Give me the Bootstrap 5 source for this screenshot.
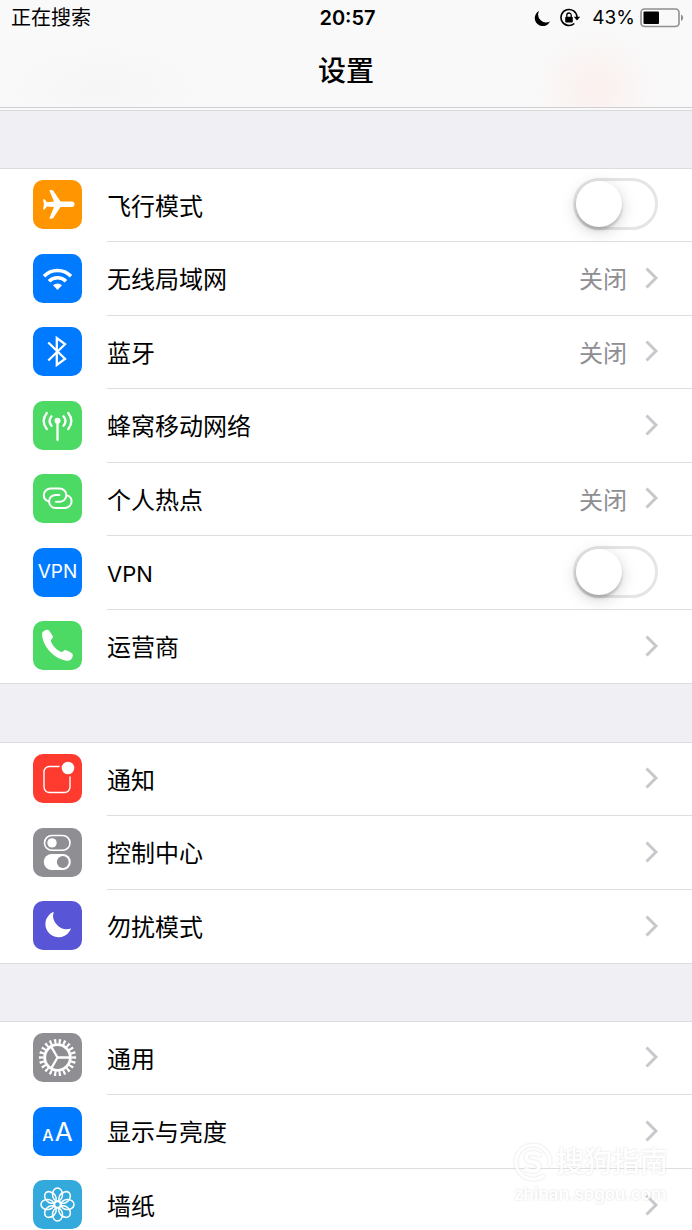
<!DOCTYPE html>
<html lang="zh-CN">
<head>
<meta charset="utf-8">
<meta name="viewport" content="width=device-width, initial-scale=1">
<title>设置</title>
<link href="https://cdn.jsdelivr.net/npm/bootstrap@5.3.0/dist/css/bootstrap.min.css" rel="stylesheet">
<style>
  body { font-family: "Inter", "Noto Sans CJK SC", sans-serif; color: #000; background: #efeff4; }
  .screen { height: 100vh; }
  .top-bar {
    background: radial-gradient(circle 62px at 86% 84%, #fbf0ee, rgba(251, 240, 238, 0)),
                radial-gradient(ellipse 110px 50px at 15% 84%, #f6f6f6, rgba(246, 246, 246, 0)), #f9f9f9;
    border-bottom: 1px solid #cfcfd2;
  }
  .status { height: 36px; padding: 0 8px 0 11px; font-size: 20px; line-height: 36px; }
  .clock { font-size: 20px; font-weight: 600; }
  .battery-text { font-size: 19px; margin: 0 5px 0 11px; }
  .page-title { font-size: 28px; line-height: 70px; font-weight: 500; height: 71px; }
  .settings { min-height: 0; overflow-y: auto; scrollbar-width: none; }
  .settings::-webkit-scrollbar { display: none; }
  .edge { height: 3px; background: #f9f9f9; border-bottom: 1px solid #d9d9dc; }
  .group { margin-top: 58px; border-top: 1px solid #dcdce0; border-bottom: 1px solid #dcdce0; background: #fff; }
  .edge + .group, .group:last-child { margin-top: 57px; }
  .cell { height: 73px; padding-left: 33px; gap: 25px; color: #000; font-size: 24px; line-height: 36px; }
  .group > li:nth-child(even) .cell { height: 74px; }
  .cell-body { border-bottom: 1px solid #dedee1; padding: 0 34px 2px 0; gap: 18px; }
  .cell-body > span { padding-top: 5px; }
  .group > li:last-child .cell-body { border-bottom: 0; }
  .tile { width: 49px; height: 49px; margin-bottom: 2px; border-radius: 10px; color: #fff; overflow: hidden; }
  .tile svg { display: block; width: 49px; height: 49px; fill: none; stroke: #fff; }
  .t-orange { background: #ff9500; }
  .t-blue { background: #007aff; }
  .t-green { background: #4cd964; }
  .t-red { background: #ff3b30; }
  .t-gray { background: #8e8e93; }
  .t-purple { background: #5856d6; }
  .t-cyan { background: #34aadc; }
  .latin { font-size: 22px; }
  .tile-vpn { font-size: 19px; font-weight: 400; }
  .tile-aa { gap: 1px; line-height: 49px; }
  .a-small { font-size: 16px; font-weight: 500; }
  .a-large { font-size: 26px; font-weight: 400; }
  .value { color: #8e8e93; }
  .chevron { width: 13px; height: 22px; fill: none; stroke: #c7c7cc; stroke-width: 3; }
  .ios-switch.form-check-input {
    position: relative; width: 85px; height: 52px; margin: 0; border: 3px solid #e5e5e5; border-radius: 26px;
    background: #fff; cursor: pointer;
  }
  .ios-switch::before {
    content: ""; position: absolute; left: 0; top: 0; width: 46px; height: 46px; border-radius: 50%;
    background: #fff; box-shadow: 0 3px 3px rgba(0, 0, 0, .18), 0 4px 16px rgba(0, 0, 0, .18);
  }
  .ios-switch.form-check-input:checked { background: #4cd964; border-color: #4cd964; }
  .ios-switch:checked::before { left: auto; right: 0; }
  .stamp { position: fixed; right: 24px; bottom: 24px; color: #fff; opacity: .8; pointer-events: none; filter: drop-shadow(0 0 1px #d4d4d4); }
  .stamp svg { width: 38px; height: 38px; fill: none; stroke: #fff; stroke-width: 3; }
  .stamp-name { font-size: 28px; line-height: 40px; font-weight: 500; }
  .stamp-url { font-size: 17px; line-height: 24px; font-weight: 600; }
</style>
</head>
<body>
<svg class="d-none" aria-hidden="true">
  <symbol id="chev" viewBox="0 0 13 22"><path d="M1.5 1.5 11 11 1.5 20.5"/></symbol>
</svg>
<div class="screen d-flex flex-column">
  <header class="top-bar flex-shrink-0">
    <div class="status row g-0 align-items-center">
      <div class="col">正在搜索</div>
      <div class="col-auto clock">20:57</div>
      <div class="col d-flex justify-content-end align-items-center">
        <svg width="17" height="17" viewBox="0 0 17 17" aria-label="勿扰"><path d="M5 1A8 8 0 1 0 16 11.5 8 8 0 0 1 5 1Z"/></svg>
        <svg class="ms-2" width="22" height="20" viewBox="0 0 22 20" fill="none" stroke="#000" stroke-width="1.6" aria-label="方向锁定"><path d="M15.3 15.5A8 8 0 1 1 18 9"/><path d="M14.8 8.8h6.4L18 12.6Z" fill="#000" stroke="none"/><rect x="6.2" y="8.8" width="7.6" height="5.6" rx="1" fill="#000" stroke="none"/><path d="M7.8 9V7.2a2.2 2.2 0 0 1 4.4 0V9" stroke-width="1.3"/></svg>
        <span class="battery-text">43%</span>
        <svg width="44" height="20" viewBox="0 0 44 20" aria-label="电池"><rect x="1" y="1" width="38" height="17.5" rx="3.5" fill="none" stroke="#8f8f8f" stroke-width="1.6"/><rect x="3.5" y="3.6" width="15.5" height="12.4" rx="1"/><path d="M41 6.5q2.2 1 2.2 3.3T41 13Z" fill="#8f8f8f"/></svg>
      </div>
    </div>
    <h1 class="page-title text-center m-0">设置</h1>
  </header>

  <main class="settings flex-fill">
    <div class="edge"></div>
    <ul class="group list-unstyled mb-0">
      <li><label class="cell d-flex align-items-center" for="airplane">
        <span class="tile t-orange flex-shrink-0"><svg viewBox="0 0 49 49"><path fill="#fff" stroke="none" d="M27.500 21.500H38.800a2.700 2.700 0 0 1 0 5.400H27.500L20.300 38Q19 39.200 16.300 38.500L21 27 14 26.500 11.500 29.500H10L11 24.400 10 19.300H11.500L14 22.300 21 21.500 16.300 10.300Q19 9.300 20.300 10.800Z"/></svg></span>
        <span class="cell-body d-flex align-items-center flex-fill h-100"><span class="me-auto">飞行模式</span><input class="ios-switch form-check-input" type="checkbox" role="switch" id="airplane"></span>
      </label></li>
      <li><a class="cell d-flex align-items-center text-decoration-none" href="#wifi">
        <span class="tile t-blue flex-shrink-0"><svg viewBox="0 0 49 49"><path stroke-width="3.5" d="M11 22.300A18.500 18.500 0 0 1 38 22.300M16 27.300A12 12 0 0 1 33 27.300"/><path fill="#fff" stroke="none" d="M24.500 36 20 31.300A6.300 6.300 0 0 1 29 31.300Z"/></svg></span>
        <span class="cell-body d-flex align-items-center flex-fill h-100"><span class="me-auto">无线局域网</span><span class="value">关闭</span><svg class="chevron"><use href="#chev"/></svg></span>
      </a></li>
      <li><a class="cell d-flex align-items-center text-decoration-none" href="#bluetooth">
        <span class="tile t-blue flex-shrink-0"><svg viewBox="0 0 49 49"><path stroke-width="2.3" d="M15.300 15.500 32 31.800 23.800 38V11L32 17.200 15.300 33.500"/></svg></span>
        <span class="cell-body d-flex align-items-center flex-fill h-100"><span class="me-auto">蓝牙</span><span class="value">关闭</span><svg class="chevron"><use href="#chev"/></svg></span>
      </a></li>
      <li><a class="cell d-flex align-items-center text-decoration-none" href="#cellular">
        <span class="tile t-green flex-shrink-0"><svg viewBox="0 0 49 49"><circle cx="24.500" cy="19.700" r="3" fill="#fff" stroke="none"/><path stroke-width="2.300" stroke-linecap="round" d="M24.500 20V39M18.500 15.300Q14.500 20 18.500 24.800M30.500 15.300Q34.500 20 30.500 24.800M13.800 12Q7.500 20 13.800 28M35.200 12Q41.500 20 35.200 28"/></svg></span>
        <span class="cell-body d-flex align-items-center flex-fill h-100"><span class="me-auto">蜂窝移动网络</span><svg class="chevron"><use href="#chev"/></svg></span>
      </a></li>
      <li><a class="cell d-flex align-items-center text-decoration-none" href="#hotspot">
        <span class="tile t-green flex-shrink-0"><svg viewBox="0 0 49 49"><g stroke-width="2" stroke-linecap="round"><path id="loop" d="M15.500 27.200C12.500 26.300 10.800 24 10.800 21.200 10.800 17.500 14 14.600 17.500 14.600H26.500C30.500 14.600 33.300 17.500 33.300 21.200S30.500 27.700 26.800 27.700H23"/><use href="#loop" transform="rotate(180 24.700 24.300)"/></g></svg></span>
        <span class="cell-body d-flex align-items-center flex-fill h-100"><span class="me-auto">个人热点</span><span class="value">关闭</span><svg class="chevron"><use href="#chev"/></svg></span>
      </a></li>
      <li><label class="cell d-flex align-items-center" for="vpn">
        <span class="tile tile-vpn t-blue flex-shrink-0 d-flex align-items-center justify-content-center" aria-hidden="true">VPN</span>
        <span class="cell-body d-flex align-items-center flex-fill h-100"><span class="latin me-auto">VPN</span><input class="ios-switch form-check-input" type="checkbox" role="switch" id="vpn"></span>
      </label></li>
      <li><a class="cell d-flex align-items-center text-decoration-none" href="#carrier">
        <span class="tile t-green flex-shrink-0"><svg viewBox="0 0 49 49"><path fill="#fff" stroke="none" d="M9 13C9 10.500 13 8.500 15 8.800Q16 9 20 15.500C20.300 17 17.500 18.500 17.800 20 19.500 25 24 29.500 28.500 31 30 31 31 28.800 32.500 29Q39.500 31.500 39.800 33.500C40 37 37.500 40 34.500 39.800 22 38.500 9.500 26 9 13Z"/></svg></span>
        <span class="cell-body d-flex align-items-center flex-fill h-100"><span class="me-auto">运营商</span><svg class="chevron"><use href="#chev"/></svg></span>
      </a></li>
    </ul>

    <ul class="group list-unstyled mb-0">
      <li><a class="cell d-flex align-items-center text-decoration-none" href="#notifications">
        <span class="tile t-red flex-shrink-0"><svg viewBox="0 0 49 49"><rect x="11" y="12.500" width="26" height="26" rx="5.500" stroke-width="1.400"/><circle cx="35" cy="14" r="7.500" fill="#fff" stroke="#ff3b30" stroke-width="2.400"/></svg></span>
        <span class="cell-body d-flex align-items-center flex-fill h-100"><span class="me-auto">通知</span><svg class="chevron"><use href="#chev"/></svg></span>
      </a></li>
      <li><a class="cell d-flex align-items-center text-decoration-none" href="#control-center">
        <span class="tile t-gray flex-shrink-0"><svg viewBox="0 0 49 49"><rect x="11.500" y="7.500" width="25.500" height="14.800" rx="7.400" stroke-width="1.600"/><circle cx="19" cy="14.900" r="4.700" fill="#fff" stroke="none"/><rect x="10.800" y="26" width="27" height="16" rx="8" fill="#fff" stroke="none"/><circle cx="29.800" cy="34" r="5.900" fill="#8e8e93" stroke="none"/></svg></span>
        <span class="cell-body d-flex align-items-center flex-fill h-100"><span class="me-auto">控制中心</span><svg class="chevron"><use href="#chev"/></svg></span>
      </a></li>
      <li><a class="cell d-flex align-items-center text-decoration-none" href="#do-not-disturb">
        <span class="tile t-purple flex-shrink-0"><svg viewBox="0 0 49 49"><path fill="#fff" stroke="none" d="M20.700 10.800A13.200 13.200 0 1 0 38 27.500 13.600 13.600 0 0 1 20.700 10.800Z"/></svg></span>
        <span class="cell-body d-flex align-items-center flex-fill h-100"><span class="me-auto">勿扰模式</span><svg class="chevron"><use href="#chev"/></svg></span>
      </a></li>
    </ul>

    <ul class="group list-unstyled mb-0">
      <li><a class="cell d-flex align-items-center text-decoration-none" href="#general">
        <span class="tile t-gray flex-shrink-0"><svg viewBox="0 0 49 49"><circle cx="24.500" cy="24.500" r="12.800" stroke-width="2.800"/><circle cx="24.500" cy="24.500" r="16.200" stroke-width="4.800" pathLength="44" stroke-dasharray="0.950 1.050" stroke-dashoffset="0.470"/><path stroke-width="2.300" d="M24.500 24.500H37M24.500 24.500 18.200 13.600M24.500 24.500 18.200 35.400"/></svg></span>
        <span class="cell-body d-flex align-items-center flex-fill h-100"><span class="me-auto">通用</span><svg class="chevron"><use href="#chev"/></svg></span>
      </a></li>
      <li><a class="cell d-flex align-items-center text-decoration-none" href="#display">
        <span class="tile tile-aa t-blue flex-shrink-0 d-flex align-items-baseline justify-content-center" aria-hidden="true"><span class="a-small">A</span><span class="a-large">A</span></span>
        <span class="cell-body d-flex align-items-center flex-fill h-100"><span class="me-auto">显示与亮度</span><svg class="chevron"><use href="#chev"/></svg></span>
      </a></li>
      <li><a class="cell d-flex align-items-center text-decoration-none" href="#wallpaper">
        <span class="tile t-cyan flex-shrink-0"><svg viewBox="0 0 49 49" stroke-width="1.500"><circle cx="24.500" cy="24.500" r="3"/><g id="petals"><ellipse cx="24.500" cy="14.500" rx="5" ry="6.500"/><ellipse cx="24.500" cy="34.500" rx="5" ry="6.500"/><ellipse cx="14.500" cy="24.500" rx="6.500" ry="5"/><ellipse cx="34.500" cy="24.500" rx="6.500" ry="5"/></g><use href="#petals" transform="rotate(45 24.500 24.500)"/></svg></span>
        <span class="cell-body d-flex align-items-center flex-fill h-100"><span class="me-auto">墙纸</span><svg class="chevron"><use href="#chev"/></svg></span>
      </a></li>
    </ul>
  </main>

  <div class="stamp">
    <div class="d-flex align-items-center gap-1">
      <svg viewBox="0 0 38 38"><path d="M30 32A17 17 0 1 1 35.500 23"/><path stroke-width="4" d="M26.500 13Q24 10 19 10C10 10 10 18 18.500 19S27 28 19 28Q13.500 28 11 25"/></svg>
      <span class="stamp-name">搜狗指南</span>
    </div>
    <div class="stamp-url">zhinan.sogou.com</div>
  </div>
</div>
<script src="https://cdn.jsdelivr.net/npm/bootstrap@5.3.0/dist/js/bootstrap.bundle.min.js"></script>
</body>
</html>
